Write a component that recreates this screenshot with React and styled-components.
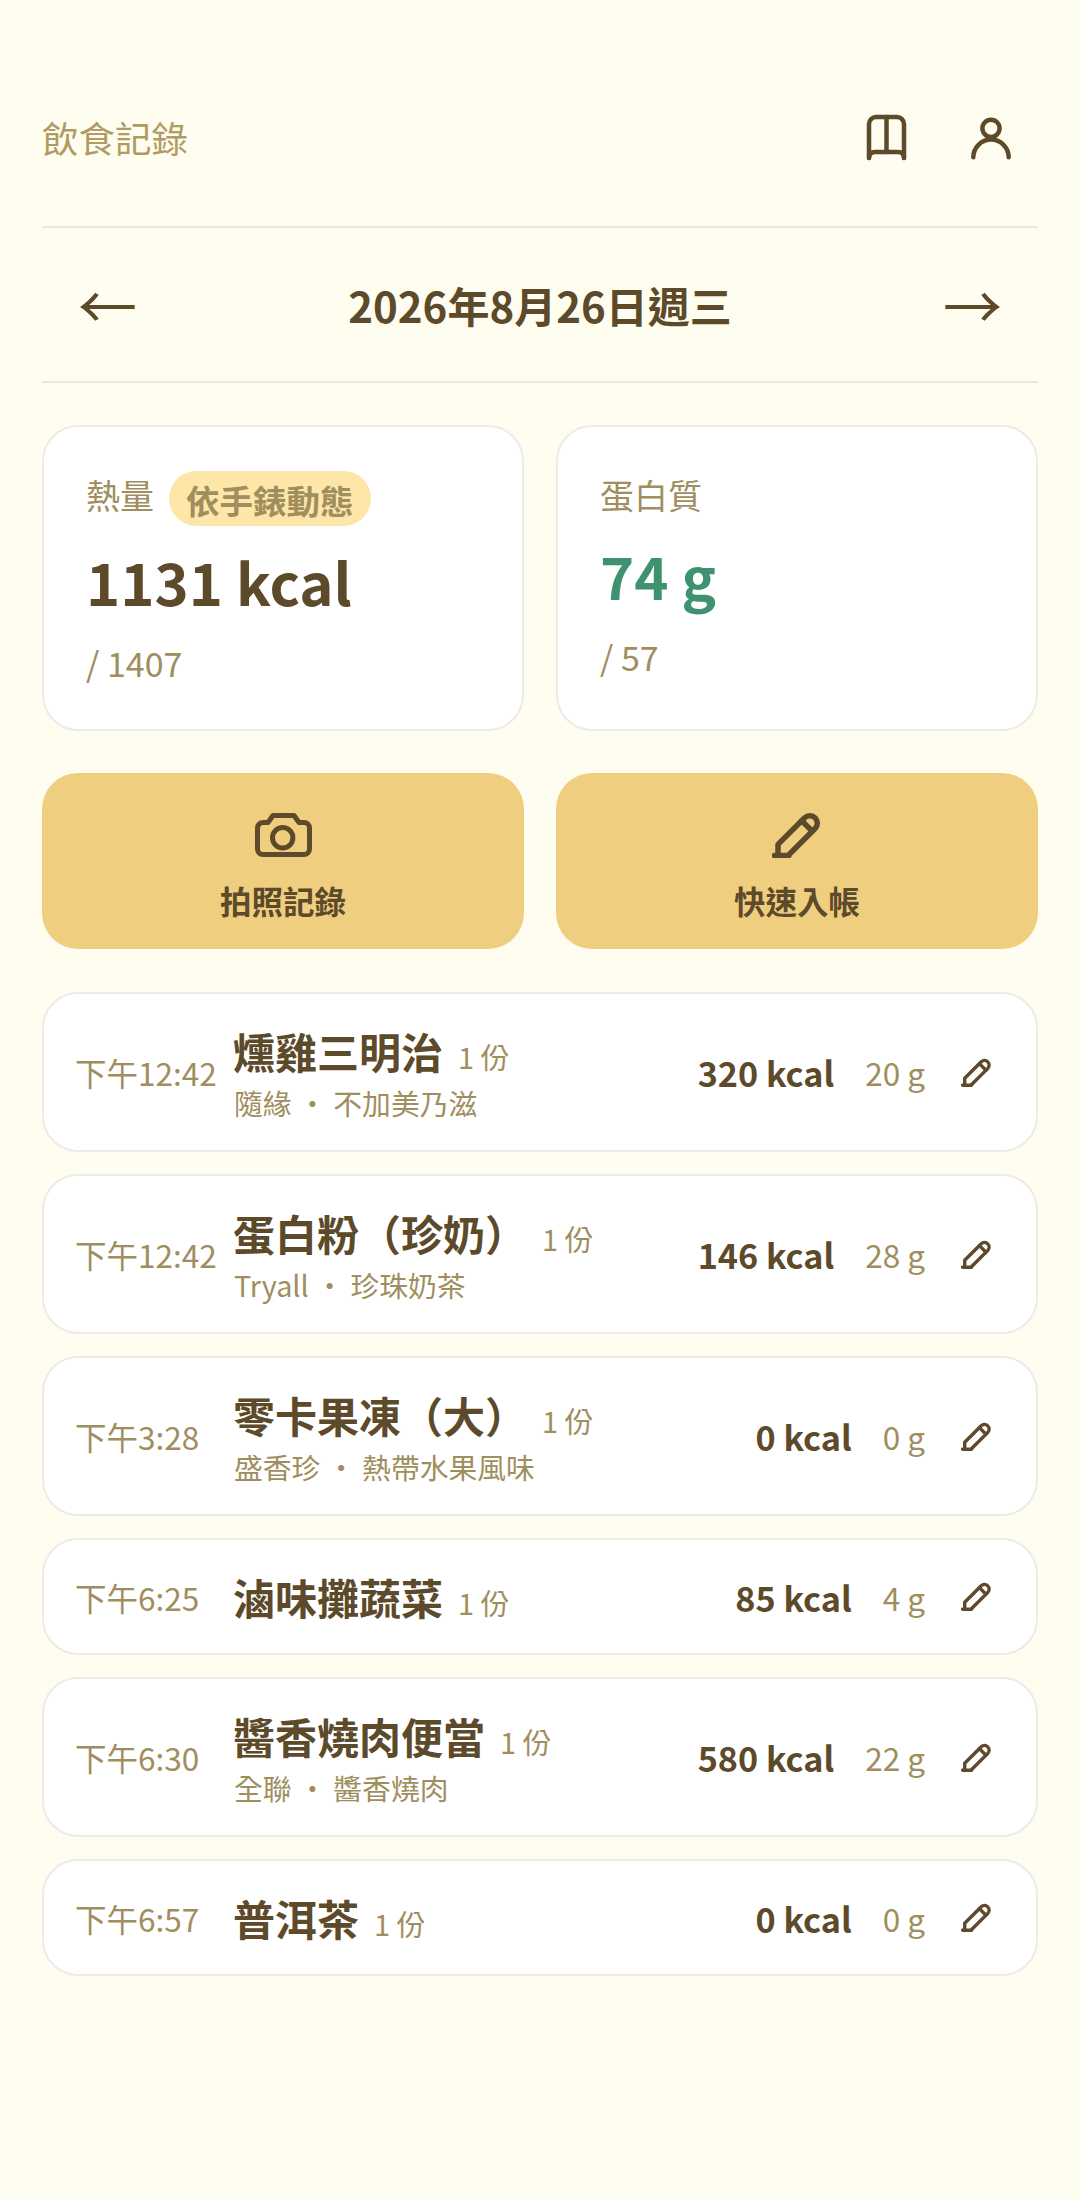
import React from "react";
import styled, { createGlobalStyle } from "styled-components";

const GlobalStyle = createGlobalStyle`
  html, body {
    margin: 0;
    padding: 0;
    background: #fffdf0;
  }
  * {
    box-sizing: border-box;
  }
  body {
    font-family: "Noto Sans CJK TC", "Noto Sans", sans-serif;
    color: #5c4a2a;
  }
`;

const Page = styled.div`
  width: 1080px;
  min-height: 2199px;
  padding: 90px 42px 0;
`;

const Header = styled.header`
  display: flex;
  justify-content: space-between;
  align-items: center;
  height: 138px;
  padding-bottom: 42px;
  border-bottom: 2px solid #ebe8da;
`;

const AppTitle = styled.h1`
  margin: 0;
  font-size: 36.5px;
  font-weight: 400;
  color: #b09c62;
`;

const HeaderIcons = styled.div`
  display: flex;
  align-items: flex-start;
  gap: 56px;
  padding-right: 24px;
  margin-top: 4px;
`;

const DateNav = styled.nav`
  display: flex;
  justify-content: space-between;
  align-items: center;
  height: 155px;
  padding: 0 36px;
  border-bottom: 2px solid #ebe8da;
`;

const NavArrow = styled.span`
  margin-bottom: 2px;
  font-size: 59px;
  line-height: 1;
`;

const DateText = styled.div`
  font-size: 42px;
  font-weight: 700;
`;

const Grid = styled.div`
  display: grid;
  grid-template-columns: 1fr 1fr;
  gap: 32px;
  margin-top: 42px;
`;

const Card = styled.div`
  height: 306px;
  padding: 43px 42px 0;
  background: #fff;
  border: 2px solid #ecebe8;
  border-radius: 36px;
`;

const CardLabel = styled.div`
  display: flex;
  align-items: flex-start;
  gap: 15px;
  font-size: 34px;
  line-height: 50px;
  color: #a08e5e;
`;

const Badge = styled.span`
  padding: 4px 17px 1px;
  margin-top: 1px;
  border-radius: 28px;
  background: #fde6a8;
  font-size: 33.5px;
  font-weight: 700;
`;

const CardValue = styled.div`
  margin-top: 15px;
  font-size: 58px;
  line-height: 80px;
  font-weight: 700;
  color: ${(p) => p.$color || "#5c4a2a"};
`;

const CardGoal = styled.div`
  margin-top: 17px;
  font-size: 34px;
  line-height: 50px;
  color: #a08e5e;
`;

const ActionButton = styled.button`
  display: flex;
  flex-direction: column;
  align-items: center;
  height: 176px;
  padding: 39px 0 0;
  gap: 19px;
  border: none;
  border-radius: 36px;
  background: #f0ce80;
  color: #5c4a2a;
  font-family: inherit;
  font-size: 31.5px;
  line-height: 46px;
  font-weight: 700;
`;

const List = styled.div`
  display: flex;
  flex-direction: column;
  gap: 22px;
  margin-top: 43px;
`;

const Row = styled.div`
  display: flex;
  align-items: center;
  height: ${(p) => (p.$tall ? "160px" : "117px")};
  padding: 0 44px 0 31px;
  background: #fff;
  border: 2px solid #ecebe8;
  border-radius: 36px;
`;

const Time = styled.div`
  width: 159px;
  flex: none;
  font-size: 31.5px;
  color: #a08e5e;
`;

const Info = styled.div`
  flex: 1;
  min-width: 0;
  padding-top: ${(p) => (p.$tall ? "2px" : "0")};
`;

const NameLine = styled.div`
  display: flex;
  align-items: baseline;
  gap: 15px;
`;

const Name = styled.span`
  margin-left: -1px;
  font-size: 42px;
  line-height: 56px;
  font-weight: 700;
`;

const Qty = styled.span`
  font-size: 29px;
  color: #a08e5e;
`;

const Sub = styled.div`
  margin-top: 4px;
  font-size: 28.8px;
  line-height: 40px;
  color: #a08e5e;
`;

const Kcal = styled.div`
  font-size: 34.2px;
  font-weight: 700;
`;

const Protein = styled.div`
  margin-left: 31px;
  margin-right: 36px;
  font-size: 31.5px;
  color: #a08e5e;
`;

const Stroke = styled.svg`
  flex: none;
  display: block;
  fill: none;
  stroke: currentColor;
  stroke-linecap: round;
  stroke-linejoin: round;
`;

function BookIcon() {
  return (
    <Stroke width="48" height="54" viewBox="0 0 48 54" strokeWidth="4.5">
      <path d="M5 46V12a7 7 0 0 1 7-7h21a7 7 0 0 1 7 7v34" />
      <path d="M5 46q0-6 6-6h23q6 0 6 6" />
      <path d="M22.5 5v35" />
    </Stroke>
  );
}

function UserIcon() {
  return (
    <Stroke width="46" height="50" viewBox="0 0 46 50" strokeWidth="4.5">
      <circle cx="23" cy="16.3" r="8.6" />
      <path d="M5.3 45.3a17.7 17.7 0 0 1 35.4 0" />
    </Stroke>
  );
}

function CameraIcon() {
  return (
    <Stroke width="57" height="46" viewBox="0 0 57 46" strokeWidth="5">
      <path d="M8 10.5h5l5-7h21l5 7h5a5.5 5.5 0 0 1 5.5 5.5v21a5.5 5.5 0 0 1-5.5 5.5H8A5.5 5.5 0 0 1 2.5 37V16A5.5 5.5 0 0 1 8 10.5z" />
      <circle cx="27.7" cy="25.7" r="10.2" />
    </Stroke>
  );
}

function PenIcon({ width = 50, height = 46 }) {
  return (
    <Stroke width={width} height={height} viewBox="0 0 50 46" strokeWidth="5.5">
      <path d="M6 42v-9.6L32.7 5.7a7.5 7.5 0 0 1 10.6 10.6L17.6 42" />
      <path d="M2.5 43.5H17" />
      <path d="M29.7 8.7l10.6 10.6" />
    </Stroke>
  );
}

const meals = [
  { time: "下午12:42", name: "燻雞三明治", sub: "隨緣 ・ 不加美乃滋", kcal: 320, protein: 20 },
  { time: "下午12:42", name: "蛋白粉\uFF08珍奶\uFF09", sub: "Tryall ・ 珍珠奶茶", kcal: 146, protein: 28 },
  { time: "下午3:28", name: "零卡果凍\uFF08大\uFF09", sub: "盛香珍 ・ 熱帶水果風味", kcal: 0, protein: 0 },
  { time: "下午6:25", name: "滷味攤蔬菜", kcal: 85, protein: 4 },
  { time: "下午6:30", name: "醬香燒肉便當", sub: "全聯 ・ 醬香燒肉", kcal: 580, protein: 22 },
  { time: "下午6:57", name: "普洱茶", kcal: 0, protein: 0 },
];

export default function App() {
  return (
    <Page>
      <GlobalStyle />
      <Header>
        <AppTitle>飲食記錄</AppTitle>
        <HeaderIcons>
          <BookIcon />
          <UserIcon />
        </HeaderIcons>
      </Header>

      <DateNav>
        <NavArrow>←</NavArrow>
        <DateText>2026年8月26日週三</DateText>
        <NavArrow>→</NavArrow>
      </DateNav>

      <Grid>
        <Card>
          <CardLabel>
            熱量
            <Badge>依手錶動態</Badge>
          </CardLabel>
          <CardValue>1131 kcal</CardValue>
          <CardGoal>/ 1407</CardGoal>
        </Card>
        <Card>
          <CardLabel>蛋白質</CardLabel>
          <CardValue $color="#3f9270">74 g</CardValue>
          <CardGoal>/ 57</CardGoal>
        </Card>
      </Grid>

      <Grid>
        <ActionButton>
          <CameraIcon />
          拍照記錄
        </ActionButton>
        <ActionButton>
          <PenIcon />
          快速入帳
        </ActionButton>
      </Grid>

      <List>
        {meals.map((meal, i) => (
          <Row key={i} $tall={!!meal.sub}>
            <Time>{meal.time}</Time>
            <Info $tall={!!meal.sub}>
              <NameLine>
                <Name>{meal.name}</Name>
                <Qty>1 份</Qty>
              </NameLine>
              {meal.sub && <Sub>{meal.sub}</Sub>}
            </Info>
            <Kcal>{meal.kcal} kcal</Kcal>
            <Protein>{meal.protein} g</Protein>
            <PenIcon width={31} height={29} />
          </Row>
        ))}
      </List>
    </Page>
  );
}
